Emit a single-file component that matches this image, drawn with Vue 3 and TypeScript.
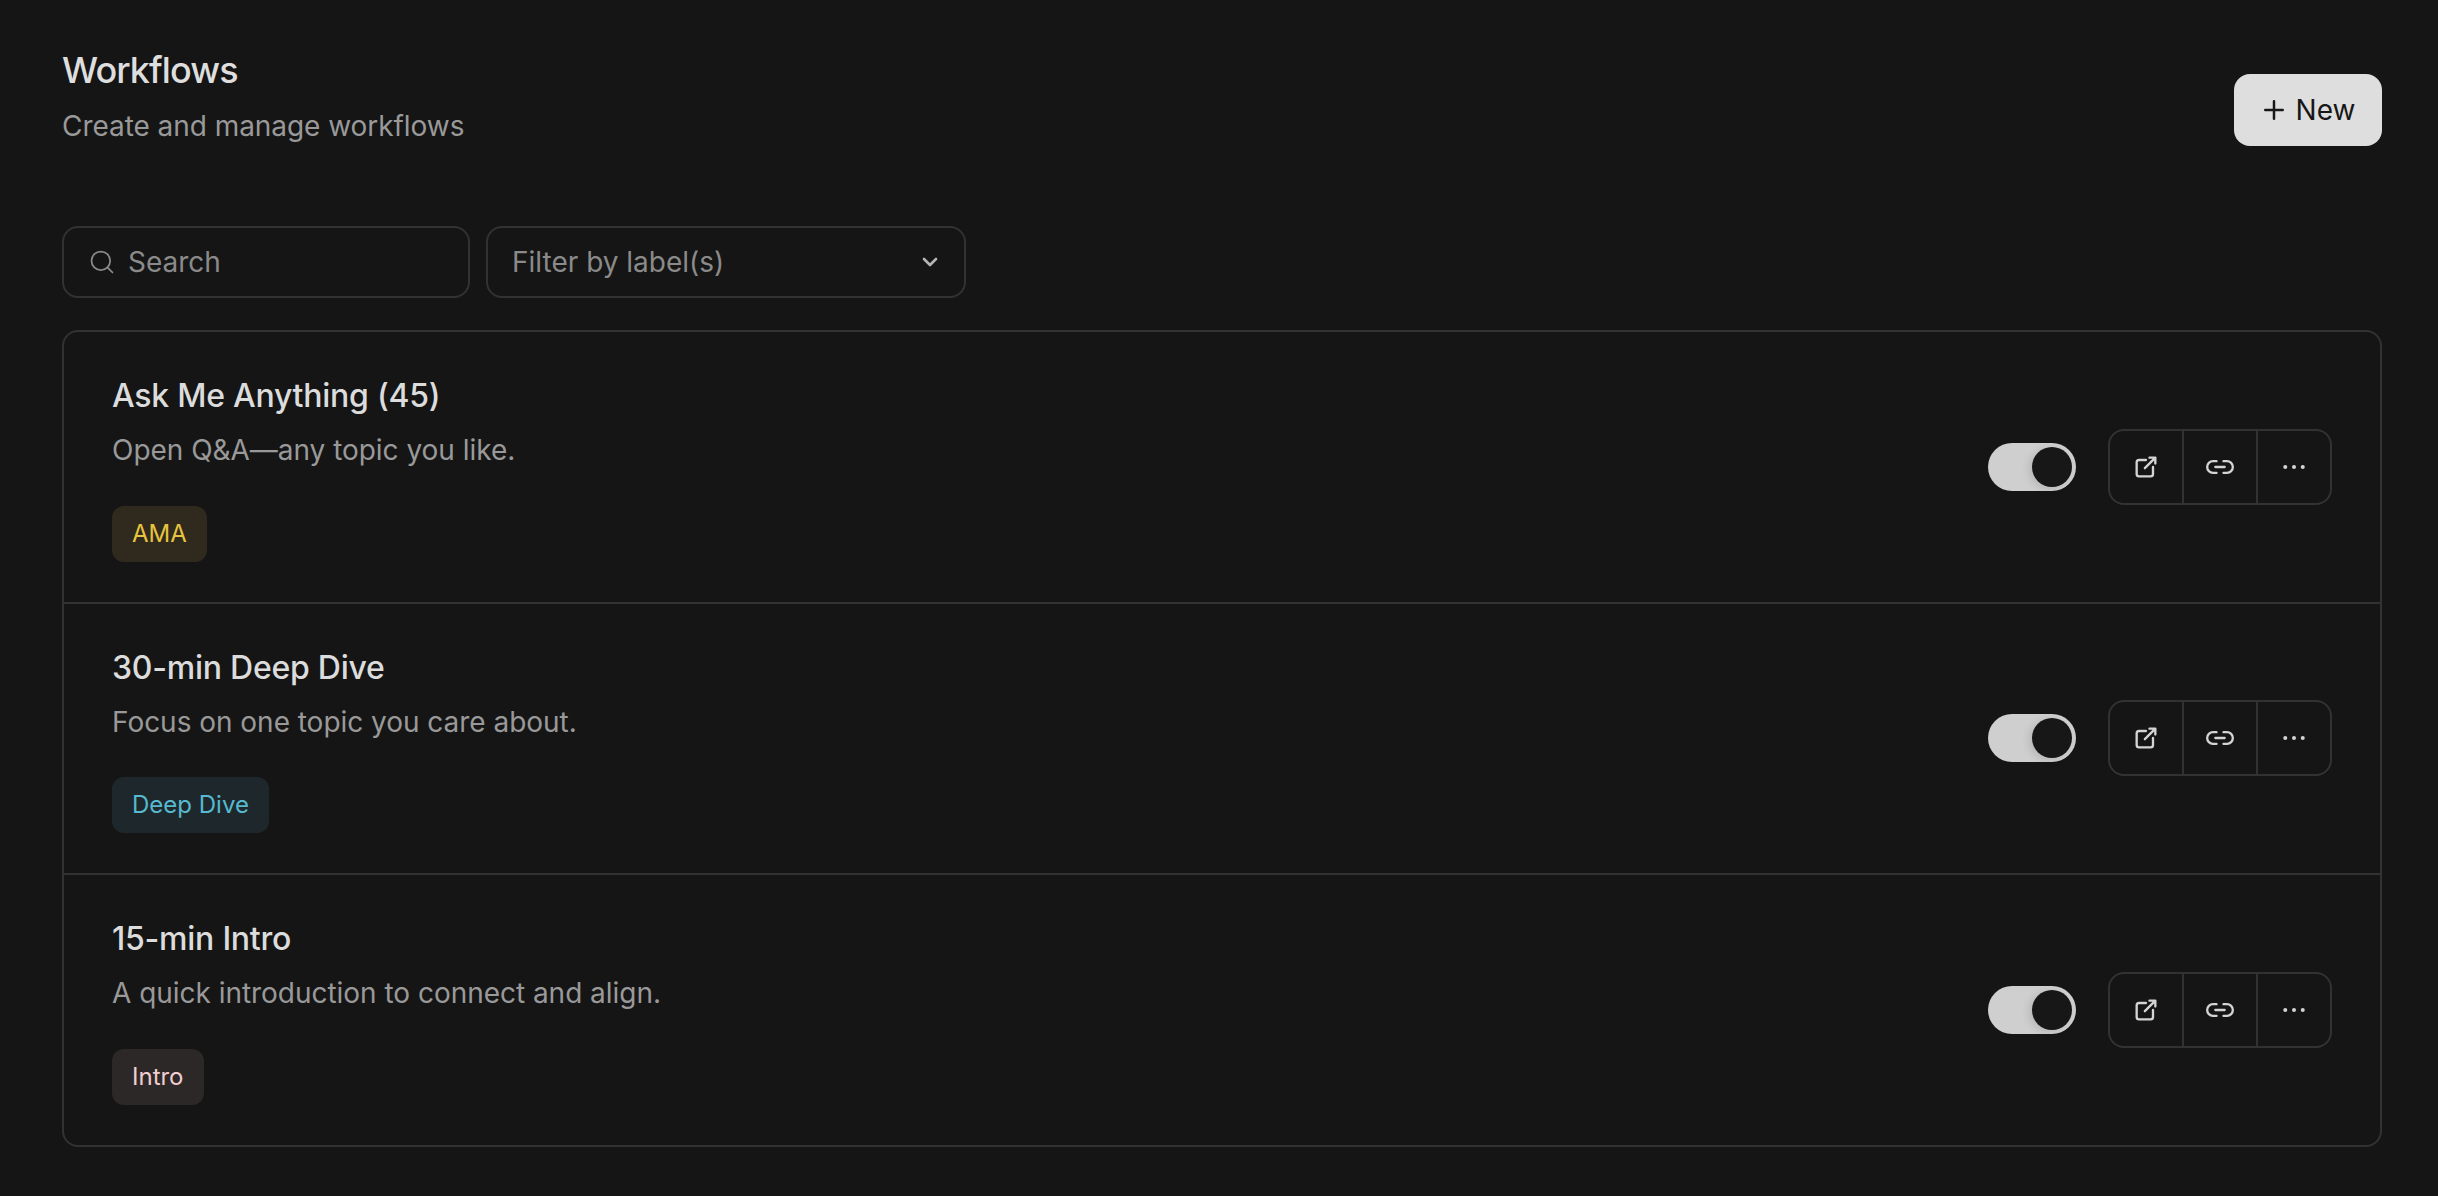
<template>
  <div class="page">
    <header class="page-header">
      <div class="heading">
        <h1>Workflows</h1>
        <p class="subtitle">Create and manage workflows</p>
      </div>
      <button class="new-button">
        <svg viewBox="0 0 24 24" fill="none" stroke="currentColor" stroke-width="2" stroke-linecap="round">
          <path d="M5 12h14M12 5v14" />
        </svg>
        New
      </button>
    </header>

    <div class="filters">
      <div class="search">
        <svg viewBox="0 0 24 24" fill="none" stroke="currentColor" stroke-width="1.5" stroke-linecap="round">
          <circle cx="11" cy="11" r="8" />
          <path d="m21 21-4.3-4.3" />
        </svg>
        <span>Search</span>
      </div>
      <div class="label-filter">
        <span>Filter by label(s)</span>
        <svg viewBox="0 0 24 24" fill="none" stroke="currentColor" stroke-width="2.6" stroke-linecap="round" stroke-linejoin="round">
          <path d="m6 9 6 6 6-6" />
        </svg>
      </div>
    </div>

    <div class="list">
      <div v-for="item in workflows" :key="item.title" class="row">
        <div class="info">
          <h2>{{ item.title }}</h2>
          <p>{{ item.description }}</p>
          <span class="tag" :class="item.tagClass">{{ item.tag }}</span>
        </div>
        <div class="controls">
          <div class="toggle"><div class="knob"></div></div>
          <div class="actions">
            <button>
              <svg class="open-icon" viewBox="0 0 24 24" fill="none" stroke="currentColor" stroke-width="2" stroke-linecap="round" stroke-linejoin="round">
                <path d="M12 6H6a2 2 0 0 0-2 2v10a2 2 0 0 0 2 2h10a2 2 0 0 0 2-2v-6" />
                <path d="M11 13l9-9M15 4h5v5" />
              </svg>
            </button>
            <button>
              <svg class="link-icon" viewBox="0 0 24 24" fill="none" stroke="currentColor" stroke-width="2" stroke-linecap="round" stroke-linejoin="round">
                <path d="M9 17H6A5 5 0 0 1 6 7h3M15 7h3a5 5 0 0 1 0 10h-3M8 12h8" />
              </svg>
            </button>
            <button>
              <svg class="more-icon" viewBox="0 0 24 24" fill="currentColor">
                <circle cx="5" cy="12" r="1.6" />
                <circle cx="12" cy="12" r="1.6" />
                <circle cx="19" cy="12" r="1.6" />
              </svg>
            </button>
          </div>
        </div>
      </div>
    </div>
  </div>
</template>

<script setup lang="ts">
interface Workflow {
  title: string
  description: string
  tag: string
  tagClass: string
}

const workflows: Workflow[] = [
  { title: 'Ask Me Anything (45)', description: 'Open Q&A—any topic you like.', tag: 'AMA', tagClass: 'yellow' },
  { title: '30-min Deep Dive', description: 'Focus on one topic you care about.', tag: 'Deep Dive', tagClass: 'cyan' },
  { title: '15-min Intro', description: 'A quick introduction to connect and align.', tag: 'Intro', tagClass: 'pink' }
]
</script>

<style>
html,
body {
  background: #151515;
}
</style>

<style scoped>
.page {
  box-sizing: border-box;
  height: 1196px;
  padding: 48px 56px 0 62px;
  background: #151515;
  font-family: Inter, "Liberation Sans", sans-serif;
}

.page-header {
  display: flex;
  justify-content: space-between;
  align-items: center;
  height: 124px;
}

.heading {
  align-self: flex-start;
}

h1 {
  margin: 0;
  font-size: 36px;
  line-height: 44px;
  font-weight: 500;
  letter-spacing: -0.9px;
  color: #dedede;
}

.subtitle {
  margin: 14px 0 0;
  font-size: 28px;
  line-height: 40px;
  letter-spacing: -0.05px;
  color: #999;
}

.new-button {
  display: flex;
  align-items: center;
  justify-content: center;
  gap: 7px;
  width: 148px;
  height: 72px;
  padding: 0 2px 0 0;
  border: none;
  border-radius: 16px;
  background: #dedede;
  color: #171717;
  font-family: inherit;
  font-size: 28px;
  font-weight: 400;
}

.new-button svg {
  width: 30px;
  height: 30px;
}

.filters {
  display: flex;
  gap: 16px;
  margin-top: 54px;
}

.search,
.label-filter {
  box-sizing: border-box;
  display: flex;
  align-items: center;
  height: 72px;
  border: 2px solid #323232;
  border-radius: 16px;
  font-size: 28px;
  color: #8a8a8a;
}

.search {
  width: 408px;
  padding: 0 24px;
  gap: 12px;
}

.search svg {
  width: 28px;
  height: 28px;
}

.label-filter {
  width: 480px;
  padding: 0 22px 0 24px;
  justify-content: space-between;
}

.label-filter svg {
  width: 24px;
  height: 24px;
  color: #b5b5b5;
}

.list {
  box-sizing: border-box;
  margin-top: 32px;
  border: 2px solid #323232;
  border-radius: 16px;
}

.row {
  box-sizing: border-box;
  display: flex;
  justify-content: space-between;
  align-items: flex-start;
  height: 271px;
  padding: 0 48px 1px;
  border-bottom: 2px solid #323232;
}

.row:first-child {
  height: 272px;
  padding-bottom: 0;
}

.row:last-child {
  border-bottom: none;
  height: 270px;
  padding-bottom: 0;
}

.info {
  padding-top: 42px;
}

h2 {
  margin: 0;
  font-size: 32px;
  line-height: 44px;
  font-weight: 500;
  letter-spacing: -0.25px;
  color: #dcdcdc;
}

.info p {
  margin: 12px 0 0;
  font-size: 28px;
  line-height: 40px;
  letter-spacing: -0.03px;
  color: #999;
}

.tag {
  display: block;
  width: fit-content;
  margin-top: 35px;
  padding: 0 20px;
  height: 56px;
  line-height: 56px;
  border-radius: 12px;
  font-size: 24px;
}

.row:first-child .tag,
.row:last-child .tag {
  margin-top: 36px;
}

.yellow {
  background: #2f2a1d;
  color: #e8c33f;
}

.cyan {
  background: #1e282c;
  color: #56b9cf;
}

.pink {
  background: #2d2828;
  color: #f0cdd0;
}

.controls {
  display: flex;
  align-items: center;
  align-self: center;
  gap: 32px;
}

.toggle {
  box-sizing: border-box;
  display: flex;
  justify-content: flex-end;
  align-items: center;
  width: 88px;
  height: 48px;
  padding: 4px;
  border-radius: 24px;
  background: #cfcfcf;
}

.knob {
  width: 40px;
  height: 40px;
  border-radius: 50%;
  background: #171717;
  box-shadow: -3px 2px 8px rgba(0, 0, 0, 0.12);
}

.actions {
  display: flex;
  box-sizing: border-box;
  height: 76px;
  border: 2px solid #323232;
  border-radius: 16px;
}

.actions button {
  width: 74px;
  padding: 0;
  display: flex;
  align-items: center;
  justify-content: center;
  border: none;
  border-right: 2px solid #323232;
  background: transparent;
  color: #d4d4d4;
}

.actions button:last-child {
  border-right: none;
  width: 72px;
}

.open-icon {
  width: 28px;
  height: 28px;
}

.link-icon {
  width: 28px;
  height: 28px;
}

.more-icon {
  width: 30px;
  height: 30px;
}
</style>
